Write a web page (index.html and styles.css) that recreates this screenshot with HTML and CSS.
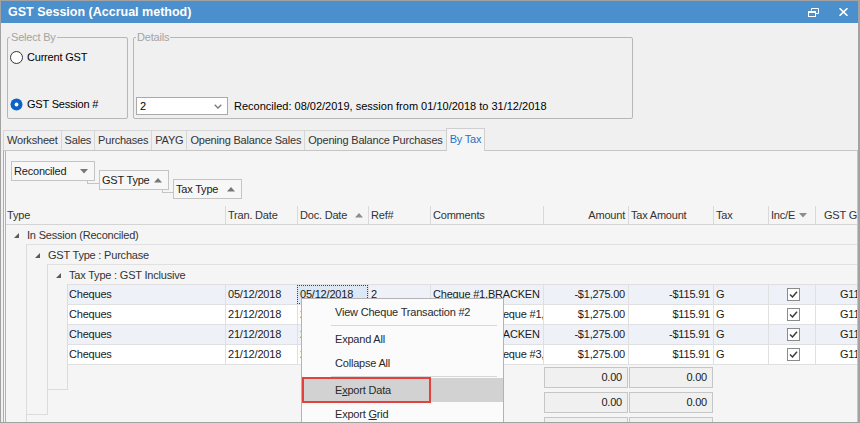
FILE: index.html
```html
<!DOCTYPE html>
<html>
<head>
<meta charset="utf-8">
<title>GST Session</title>
<link rel="stylesheet" href="styles.css">
</head>
<body>
<div class="window">
  <div class="titlebar">
    <span class="title">GST Session (Accrual method)</span>
    <div class="win-btns">
      <svg width="11" height="9" viewBox="0 0 11 9"><path d="M3.5 2.5V0.5H10.5V5.5H8" fill="none" stroke="#fff"/><rect x="0.5" y="3.5" width="7" height="5" fill="none" stroke="#fff"/><rect x="0" y="3" width="8" height="2" fill="#fff"/></svg>
      <svg width="9" height="8" viewBox="0 0 9 8"><path d="M0.5 0.2L8.5 7.8M8.5 0.2L0.5 7.8" stroke="#fff" stroke-width="1.6"/></svg>
    </div>
  </div>

  <div class="top">
    <fieldset class="grp select-by">
      <legend>Select By</legend>
      <div class="sb-body">
        <div class="radio"><span class="rb"></span>Current GST</div>
        <div class="radio"><svg class="rb-on" width="13" height="13" viewBox="0 0 13 13"><circle cx="6.5" cy="6.5" r="6" fill="#0b63c5"/><circle cx="6.5" cy="6.5" r="1.9" fill="#fff"/></svg>GST Session #</div>
      </div>
    </fieldset>
    <fieldset class="grp details">
      <legend>Details</legend>
      <div class="det-body">
        <div class="combo"><span>2</span><svg width="8" height="5" viewBox="0 0 8 5"><polyline points="0.7,0.7 4,4 7.3,0.7" fill="none" stroke="#7b7b7b" stroke-width="1.3"/></svg></div>
        <span class="det-text">Reconciled: 08/02/2019, session from 01/10/2018 to 31/12/2018</span>
      </div>
    </fieldset>
  </div>

  <div class="tabs">
    <div class="tab">Worksheet</div>
    <div class="tab">Sales</div>
    <div class="tab">Purchases</div>
    <div class="tab">PAYG</div>
    <div class="tab">Opening Balance Sales</div>
    <div class="tab">Opening Balance Purchases</div>
    <div class="tab active">By Tax</div>
  </div>

  <div class="panel">
    <div class="pwrap">
      <div class="groupby">
        <div class="gb gb1"><span>Reconciled</span><svg width="8" height="5" viewBox="0 0 8 5"><polygon points="0,0 8,0 4,4.5" fill="#777"/></svg></div>
        <div class="conn conn1"></div>
        <div class="gb gb2"><span>GST Type</span><svg width="8" height="5" viewBox="0 0 8 5"><polygon points="0,4.5 8,4.5 4,0" fill="#777"/></svg></div>
        <div class="conn conn2"></div>
        <div class="gb gb3"><span>Tax Type</span><svg width="8" height="5" viewBox="0 0 8 5"><polygon points="0,4.5 8,4.5 4,0" fill="#777"/></svg></div>
      </div>

      <div class="ghdr">
        <div class="hc first">Type</div>
        <div class="hc">Tran. Date</div>
        <div class="hc sort">Doc. Date<svg width="8" height="5" viewBox="0 0 8 5"><polygon points="0,4.5 8,4.5 4,0" fill="#8c8c8c"/></svg></div>
        <div class="hc">Ref#</div>
        <div class="hc">Comments</div>
        <div class="hc num">Amount</div>
        <div class="hc">Tax Amount</div>
        <div class="hc">Tax</div>
        <div class="hc inc">Inc/E<svg width="8" height="5" viewBox="0 0 8 5"><polygon points="0,0 8,0 4,4.5" fill="#8c8c8c"/></svg></div>
        <div class="hc gst">GST Group</div>
      </div>

      <div class="ghead"><svg class="exp" width="5" height="5" viewBox="0 0 5 5"><polygon points="5,0 5,5 0,5" fill="#5a5a5a"/></svg>In Session (Reconciled)</div>
      <div class="gbody">
        <div class="strip"></div>
        <div class="gcontent">
          <div class="ghead"><svg class="exp" width="5" height="5" viewBox="0 0 5 5"><polygon points="5,0 5,5 0,5" fill="#5a5a5a"/></svg>GST Type : Purchase</div>
          <div class="gbody">
            <div class="strip"></div>
            <div class="gcontent">
              <div class="ghead"><svg class="exp" width="5" height="5" viewBox="0 0 5 5"><polygon points="5,0 5,5 0,5" fill="#5a5a5a"/></svg>Tax Type : GST Inclusive</div>
              <div class="gbody">
                <div class="strip s2"></div>
                <div class="gcontent">
                  <div class="drow alt">
                    <div class="dc first">Cheques</div>
                    <div class="dc">05/12/2018</div>
                    <div class="dc focus">05/12/2018</div>
                    <div class="dc">2</div>
                    <div class="dc">Cheque #1,BRACKEN</div>
                    <div class="dc num">-$1,275.00</div>
                    <div class="dc num">-$115.91</div>
                    <div class="dc">G</div>
                    <div class="dc chk"><svg width="13" height="13" viewBox="0 0 13 13"><rect x="0.5" y="0.5" width="12" height="12" fill="#fff" stroke="#8a8a8a"/><polyline points="3,6.5 5.5,9 10,3.8" fill="none" stroke="#3c3c3c" stroke-width="1.5"/></svg></div>
                    <div class="dc gst">G11</div>
                  </div>
                  <div class="drow">
                    <div class="dc first">Cheques</div>
                    <div class="dc">21/12/2018</div>
                    <div class="dc">21/12/2018</div>
                    <div class="dc">1</div>
                    <div class="dc">Reversal of Cheque #1,BRACKEN</div>
                    <div class="dc num">$1,275.00</div>
                    <div class="dc num">$115.91</div>
                    <div class="dc">G</div>
                    <div class="dc chk"><svg width="13" height="13" viewBox="0 0 13 13"><rect x="0.5" y="0.5" width="12" height="12" fill="#fff" stroke="#8a8a8a"/><polyline points="3,6.5 5.5,9 10,3.8" fill="none" stroke="#3c3c3c" stroke-width="1.5"/></svg></div>
                    <div class="dc gst">G11</div>
                  </div>
                  <div class="drow alt">
                    <div class="dc first">Cheques</div>
                    <div class="dc">21/12/2018</div>
                    <div class="dc">21/12/2018</div>
                    <div class="dc">4</div>
                    <div class="dc">Cheque #3,BRACKEN</div>
                    <div class="dc num">-$1,275.00</div>
                    <div class="dc num">-$115.91</div>
                    <div class="dc">G</div>
                    <div class="dc chk"><svg width="13" height="13" viewBox="0 0 13 13"><rect x="0.5" y="0.5" width="12" height="12" fill="#fff" stroke="#8a8a8a"/><polyline points="3,6.5 5.5,9 10,3.8" fill="none" stroke="#3c3c3c" stroke-width="1.5"/></svg></div>
                    <div class="dc gst">G11</div>
                  </div>
                  <div class="drow">
                    <div class="dc first">Cheques</div>
                    <div class="dc">21/12/2018</div>
                    <div class="dc">21/12/2018</div>
                    <div class="dc">3</div>
                    <div class="dc">Reversal of Cheque #3,BRACKEN</div>
                    <div class="dc num">$1,275.00</div>
                    <div class="dc num">$115.91</div>
                    <div class="dc">G</div>
                    <div class="dc chk"><svg width="13" height="13" viewBox="0 0 13 13"><rect x="0.5" y="0.5" width="12" height="12" fill="#fff" stroke="#8a8a8a"/><polyline points="3,6.5 5.5,9 10,3.8" fill="none" stroke="#3c3c3c" stroke-width="1.5"/></svg></div>
                    <div class="dc gst">G11</div>
                  </div>
                  <div class="gfoot"><span></span><div class="fbox">0.00</div><div class="fbox">0.00</div><span></span></div>
                </div>
              </div>
              <div class="gfoot"><span></span><div class="fbox">0.00</div><div class="fbox">0.00</div><span></span></div>
            </div>
          </div>
          <div class="gfoot"><span></span><div class="fbox">0.00</div><div class="fbox">0.00</div><span></span></div>
        </div>
      </div>
    </div>
  </div>

  <div class="menu">
    <div class="mi">View Cheque Transaction #2</div>
    <div class="msep"></div>
    <div class="mi">Expand All</div>
    <div class="mi">Collapse All</div>
    <div class="msep"></div>
    <div class="mi hl">E<u>x</u>port Data<div class="redbox"></div></div>
    <div class="mi">Export <u>G</u>rid</div>
  </div>
</div>
</body>
</html>
```

FILE: styles.css
```css
* { box-sizing: border-box; }
html, body { margin: 0; padding: 0; }
body {
  width: 860px;
  height: 423px;
  overflow: hidden;
  font-family: "Liberation Sans", Arial, sans-serif;
  font-size: 11px;
  letter-spacing: -0.2px;
  color: #1e1e1e;
  background: #f0f0f0;
}

.window {
  position: relative;
  width: 860px;
  height: 423px;
  border: 1px solid #a2a2a2;
  border-right-width: 2px;
  background: #f0f0f0;
  display: flex;
  flex-direction: column;
  overflow: hidden;
}

/* title bar */
.titlebar {
  flex: none;
  height: 22px;
  background: #4b8fcc;
  color: #fff;
  display: flex;
  align-items: center;
  padding-left: 7px;
}
.title { font-weight: bold; font-size: 12.5px; letter-spacing: 0; }
.win-btns {
  margin-left: auto;
  margin-right: 10px;
  display: flex;
  align-items: center;
  gap: 20px;
}

/* top group boxes */
.top {
  flex: none;
  display: flex;
  gap: 5px;
  padding: 8px 0 0 6px;
}
.grp {
  margin: 0;
  padding: 0;
  min-width: 0;
  height: 88px;
  border: 1px solid #b7b7b7;
  border-radius: 2px;
}
.grp legend {
  padding: 0 1px;
  margin-left: 2px;
  line-height: 13px;
  color: #a4a4a4;
}
.select-by { width: 121px; }
.details { width: 500px; }
.sb-body {
  height: 67px;
  padding: 6px 0 0 2px;
  display: flex;
  flex-direction: column;
  justify-content: space-between;
}
.radio {
  height: 14px;
  display: flex;
  align-items: center;
  gap: 4px;
  color: #000;
}
.rb {
  width: 13px;
  height: 13px;
  border: 1px solid #333;
  border-radius: 50%;
  background: #fff;
}
.det-body {
  padding: 53px 0 0 2px;
  display: flex;
  align-items: center;
  gap: 6px;
  color: #000;
}
.det-text { letter-spacing: 0; }
.combo {
  width: 92px;
  height: 18px;
  background: #fff;
  border: 1px solid #a9a9a9;
  display: flex;
  align-items: center;
  justify-content: space-between;
  padding: 0 5px 0 3px;
}

/* tabs */
.tabs {
  flex: none;
  height: 22px;
  margin-top: 9px;
  padding-left: 2px;
  display: flex;
  align-items: flex-end;
}
.tab {
  height: 20px;
  line-height: 19px;
  padding: 0 3px;
  border: 1px solid #d6d6d6;
  border-bottom: none;
  margin-right: -1px;
  background: #f0f0f0;
  color: #333;
  white-space: nowrap;
}
.tab.active {
  position: relative;
  z-index: 1;
  height: 23px;
  margin-bottom: -1px;
  line-height: 21px;
  background: #f5f5f5;
  color: #1f74c6;
  border-color: #cfcfcf;
}

/* panel */
.panel {
  flex: 1;
  min-height: 0;
  margin-left: 2px;
  background: #f5f5f5;
  border-top: 1px solid #c6c6c6;
  border-left: 1px solid #adadad;
  border-right: 1px solid #c6c6c6;
  overflow: hidden;
}
.pwrap {
  margin-left: 1px;
  height: 100%;
  border-left: 1px solid #b3b3b3;
}

/* group by area */
.groupby {
  height: 55px;
  padding: 10px 0 0 5px;
  display: flex;
  align-items: flex-start;
}
.gb {
  flex: none;
  height: 20px;
  border: 1px solid #c4c4c4;
  background: #f7f7f7;
  display: flex;
  align-items: center;
  justify-content: space-between;
  padding: 0 6px 0 2px;
  color: #222;
}
.gb1 { width: 84px; }
.gb2 { width: 70px; margin-top: 9px; }
.gb3 { width: 69px; margin-top: 18px; }
.conn {
  flex: none;
  height: 4px;
  border-left: 1px solid #c4c4c4;
  border-bottom: 1px solid #c4c4c4;
}
.conn1 { width: 12px; margin-left: -8px; margin-top: 19px; }
.conn2 { width: 11px; margin-left: -7px; margin-top: 28px; }

/* grid */
.ghdr, .drow {
  display: grid;
  grid-template-columns: 1fr 72px 71px 62px 113px 85px 85px 55px 47px 42px;
}
.ghdr {
  height: 19px;
  border-bottom: 1px solid #d4d4d4;
  color: #333;
}
.hc {
  border-left: 1px solid #d9d9d9;
  padding-left: 2px;
  line-height: 18px;
  white-space: nowrap;
  overflow: hidden;
}
.hc.first { border-left: none; padding-left: 1px; }
.hc.num { text-align: right; padding-right: 3px; }
.hc.sort {
  display: flex;
  align-items: center;
  justify-content: space-between;
  padding-right: 5px;
}
.hc.inc { display: flex; align-items: center; gap: 4px; }
.hc.gst { padding-left: 8px; }

.ghead {
  height: 19px;
  display: flex;
  align-items: center;
  padding-left: 8px;
  color: #333;
  white-space: nowrap;
}
.exp { flex: none; margin-right: 8px; margin-top: 1px; }

.gbody { display: flex; }
.strip {
  flex: none;
  width: 21px;
  border-right: 1px solid #dcdcdc;
  border-bottom: 1px solid #dcdcdc;
}
.strip.s2 { width: 20px; }
.gcontent {
  flex: 1;
  min-width: 0;
  border-top: 1px solid #e0e0e0;
}

.drow {
  height: 20px;
  border-bottom: 1px solid #e0e0e0;
  background: #fff;
  color: #1a1a1a;
}
.drow.alt { background: #eef2f8; }
.dc {
  border-left: 1px solid #e0e0e0;
  padding-left: 2px;
  line-height: 19px;
  white-space: nowrap;
  overflow: hidden;
}
.dc.first { border-left: none; padding-left: 1px; }
.dc.num { text-align: right; padding-right: 3px; }
.dc.focus {
  background: #dce8f6;
  outline: 1px dotted #444;
  outline-offset: -1px;
}
.dc.chk {
  display: flex;
  align-items: center;
  justify-content: center;
}
.dc.gst { padding-left: 24px; }

.gfoot {
  height: 25px;
  display: grid;
  grid-template-columns: 1fr 85px 85px 144px;
  align-items: start;
}
.fbox {
  margin: 2px 0 0 1px;
  height: 21px;
  border: 1px solid #c6c6c6;
  background: #f0f0f0;
  text-align: right;
  padding-right: 5px;
  line-height: 19px;
  color: #1a1a1a;
}

/* context menu */
.menu {
  position: absolute;
  left: 300px;
  top: 297px;
  width: 203px;
  height: 140px;
  padding-top: 1px;
  background: #fbfbfb;
  border: 1px solid #b3b3b3;
  z-index: 5;
  color: #2a2a2a;
}
.mi {
  height: 24px;
  line-height: 24px;
  padding-left: 33px;
  white-space: nowrap;
}
.mi.hl {
  position: relative;
  background: #d2d2d2;
}
.msep {
  margin: 1px 6px 1px 29px;
  height: 0;
  border-top: 1px solid #d7d7d7;
}
.redbox {
  position: absolute;
  left: 0;
  top: -1px;
  width: 129px;
  height: 26px;
  border: 2px solid #e2413d;
}
```
